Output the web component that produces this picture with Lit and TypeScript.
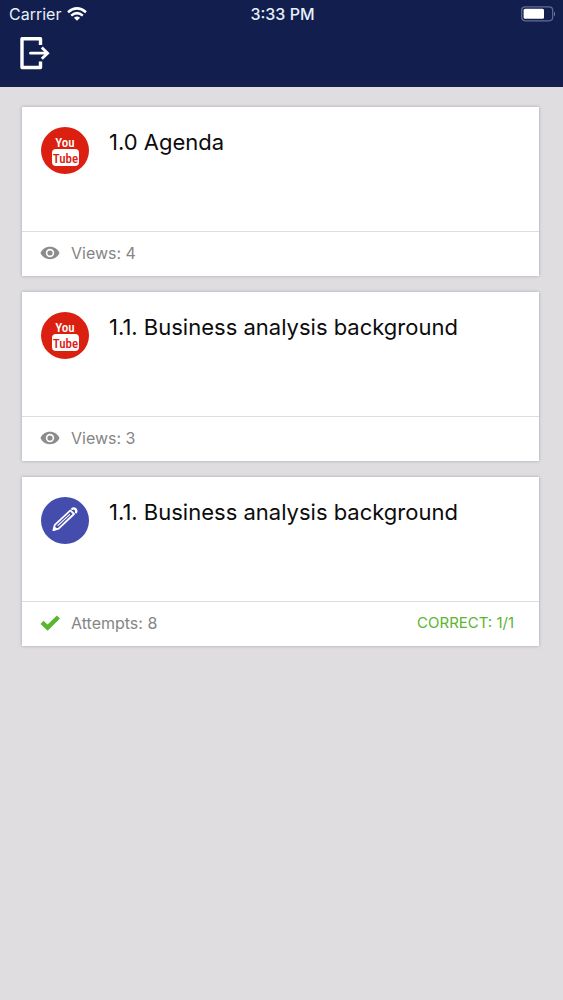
import { LitElement, html, css, nothing } from "lit";
import { customElement, property } from "lit/decorators.js";

interface Lesson {
  kind: "video" | "quiz";
  title: string;
  status: string;
  result?: string;
}

const lessons: Lesson[] = [
  { kind: "video", title: "1.0 Agenda", status: "Views: 4" },
  { kind: "video", title: "1.1. Business analysis background", status: "Views: 3" },
  {
    kind: "quiz",
    title: "1.1. Business analysis background",
    status: "Attempts: 8",
    result: "CORRECT: 1/1",
  },
];

const videoBadge = html`
  <svg width="48" height="48" viewBox="0 0 48 48" role="img" aria-label="Video">
    <ellipse cx="24" cy="23.500" rx="24" ry="23.500" fill="#db2012" />
    <text class="brand" x="24" y="20" fill="#fff">You</text>
    <rect x="11" y="22" width="27" height="17" rx="4" fill="#fff" />
    <text class="brand" x="24.500" y="36" fill="#db2012">Tube</text>
  </svg>
`;

const quizBadge = html`
  <svg width="48" height="48" viewBox="0 0 48 48" role="img" aria-label="Quiz">
    <ellipse cx="24" cy="23.5" rx="24" ry="23.5" fill="#444cae" />
    <g fill="none" stroke="#fff" stroke-width="1.8" stroke-linejoin="round" stroke-linecap="round">
      <path d="M12.4 33.2 L13.8 27.8 L29.4 13.4 L33 17 L17.6 31.6 Z" />
      <path d="M17 28.4 L28.6 17.6" stroke-width="1.1" />
      <path d="M31.4 11.8 Q33 10.8 34.4 12.2 Q35.8 13.6 35 15.2" stroke-width="2.4" />
    </g>
    <path d="M11.8 33.8 L13.2 28.8 L16.8 32.4 Z" fill="#fff" />
  </svg>
`;

const eyeIcon = html`
  <svg width="20" height="20" viewBox="0 0 20 20" aria-hidden="true">
    <path
      fill="#8c8c8c"
      fill-rule="evenodd"
      d="M10 3.800C5.500 3.800 1.900 6.400 .5 10c1.400 3.600 5 6.200 9.500 6.200s8.100-2.600 9.500-6.200C18.100 6.400 14.500 3.800 10 3.800zm0 10.400a4.200 4.200 0 1 1 0-8.400 4.200 4.200 0 0 1 0 8.400zm0-6.800a2.600 2.600 0 1 0 0 5.200 2.600 2.600 0 0 0 0-5.200z"
    />
  </svg>
`;

const checkIcon = html`
  <svg width="20" height="20" viewBox="0 0 20 20" aria-hidden="true">
    <path d="M2 9.4 L7.6 14.6 L18.4 4" fill="none" stroke="#5bb531" stroke-width="4.4" />
  </svg>
`;

@customElement("status-bar")
export class StatusBar extends LitElement {
  static styles = css`
    :host {
      display: grid;
      grid-template-columns: 1fr auto 1fr;
      align-items: center;
      height: 28px;
      padding: 0 7px 0 9px;
      color: #e8f0fb;
      font-size: 16px;
      line-height: 20px;
    }
    .carrier {
      display: flex;
      align-items: center;
      gap: 6px;
    }
    .time {
      font-weight: 500;
    }
    .battery {
      justify-self: end;
    }
    svg {
      display: block;
    }
  `;

  render() {
    return html`
      <div class="carrier">
        <span>Carrier</span>
        <svg width="20" height="14" viewBox="0 0 20 14" role="img" aria-label="Wi-Fi">
          <g fill="none" stroke="#fff" stroke-width="2.5">
            <path d="M1 5.2 Q10 -2.4 19 5.2" />
            <path d="M4.2 8.6 Q10 3.6 15.8 8.6" />
          </g>
          <path d="M10 13.8 L6.9 10.7 Q10 8.2 13.1 10.7 Z" fill="#fff" />
        </svg>
      </div>
      <span class="time">3:33 PM</span>
      <svg class="battery" width="35" height="16" viewBox="0 0 35 16" role="img" aria-label="Battery">
        <rect x=".7" y=".8" width="31" height="14" rx="3.5" fill="none" stroke="#626d98" stroke-width="1.2" />
        <rect x="2.6" y="2.8" width="20.4" height="10" rx="1.5" fill="#fff" />
        <path d="M33 5.5 Q35 8 33 10.5 Z" fill="#7c86ab" />
      </svg>
    `;
  }
}

@customElement("lesson-card")
export class LessonCard extends LitElement {
  @property({ attribute: false }) lesson!: Lesson;

  static styles = css`
    :host {
      display: block;
    }
    .card {
      background: #fff;
      box-shadow: 0 0 3px rgba(60, 60, 90, 0.35);
    }
    .body {
      display: flex;
      gap: 20px;
      min-height: 84px;
      padding: 20px 19px;
    }
    .body svg {
      flex: none;
    }
    .title {
      margin: 0;
      font-size: 22px;
      font-weight: 400;
      line-height: 30px;
      color: #0c0c0c;
    }
    .footer {
      display: flex;
      align-items: center;
      gap: 11px;
      padding: 11px 25px 13px 18px;
      border-top: 1px solid #dcdce2;
      font-size: 16px;
      line-height: 20px;
      color: #858585;
    }
    .result {
      margin-left: auto;
      font-size: 15px;
      color: #5bb531;
    }
    .brand {
      font-family: "Roboto Condensed", Roboto, "Liberation Sans", sans-serif;
      font-stretch: condensed;
      font-size: 13px;
      font-weight: 500;
      text-anchor: middle;
    }
    svg {
      display: block;
    }
  `;

  render() {
    const { kind, title, status, result } = this.lesson;
    return html`
      <article class="card">
        <div class="body">
          ${kind === "video" ? videoBadge : quizBadge}
          <h2 class="title">${title}</h2>
        </div>
        <div class="footer">
          ${kind === "video" ? eyeIcon : checkIcon}
          <span>${status}</span>
          ${result ? html`<span class="result">${result}</span>` : nothing}
        </div>
      </article>
    `;
  }
}

@customElement("app-root")
export class AppRoot extends LitElement {
  static styles = css`
    :host {
      display: block;
      min-height: 100vh;
      background: #dfdde0;
      font-family: Inter, "Liberation Sans", sans-serif;
    }
    .header {
      background: #121f4e;
    }
    .toolbar {
      display: flex;
      align-items: flex-start;
      height: 59px;
      padding: 0 12px;
    }
    .logout {
      display: block;
      padding: 8px;
      border: 0;
      background: none;
      cursor: pointer;
    }
    .logout svg {
      display: block;
    }
    .list {
      display: flex;
      flex-direction: column;
      gap: 16px;
      padding: 20px 24px 20px 22px;
    }
  `;

  render() {
    return html`
      <header class="header">
        <status-bar></status-bar>
        <div class="toolbar">
          <button class="logout" type="button" aria-label="Log out">
            <svg width="30" height="34" viewBox="0 0 30 34" fill="none" stroke="#fff">
              <path d="M20.5 9 V2.8 H2 V31.5 H20.5 V25.5" stroke-width="3.4" stroke-linejoin="round" />
              <path d="M10.5 17.2 H27" stroke-width="2.8" stroke-linecap="round" />
              <path d="M21.8 11.6 L27.6 17.2 L21.8 22.8" stroke-width="2.8" />
            </svg>
          </button>
        </div>
      </header>
      <main class="list">
        ${lessons.map((lesson) => html`<lesson-card .lesson=${lesson}></lesson-card>`)}
      </main>
    `;
  }
}
